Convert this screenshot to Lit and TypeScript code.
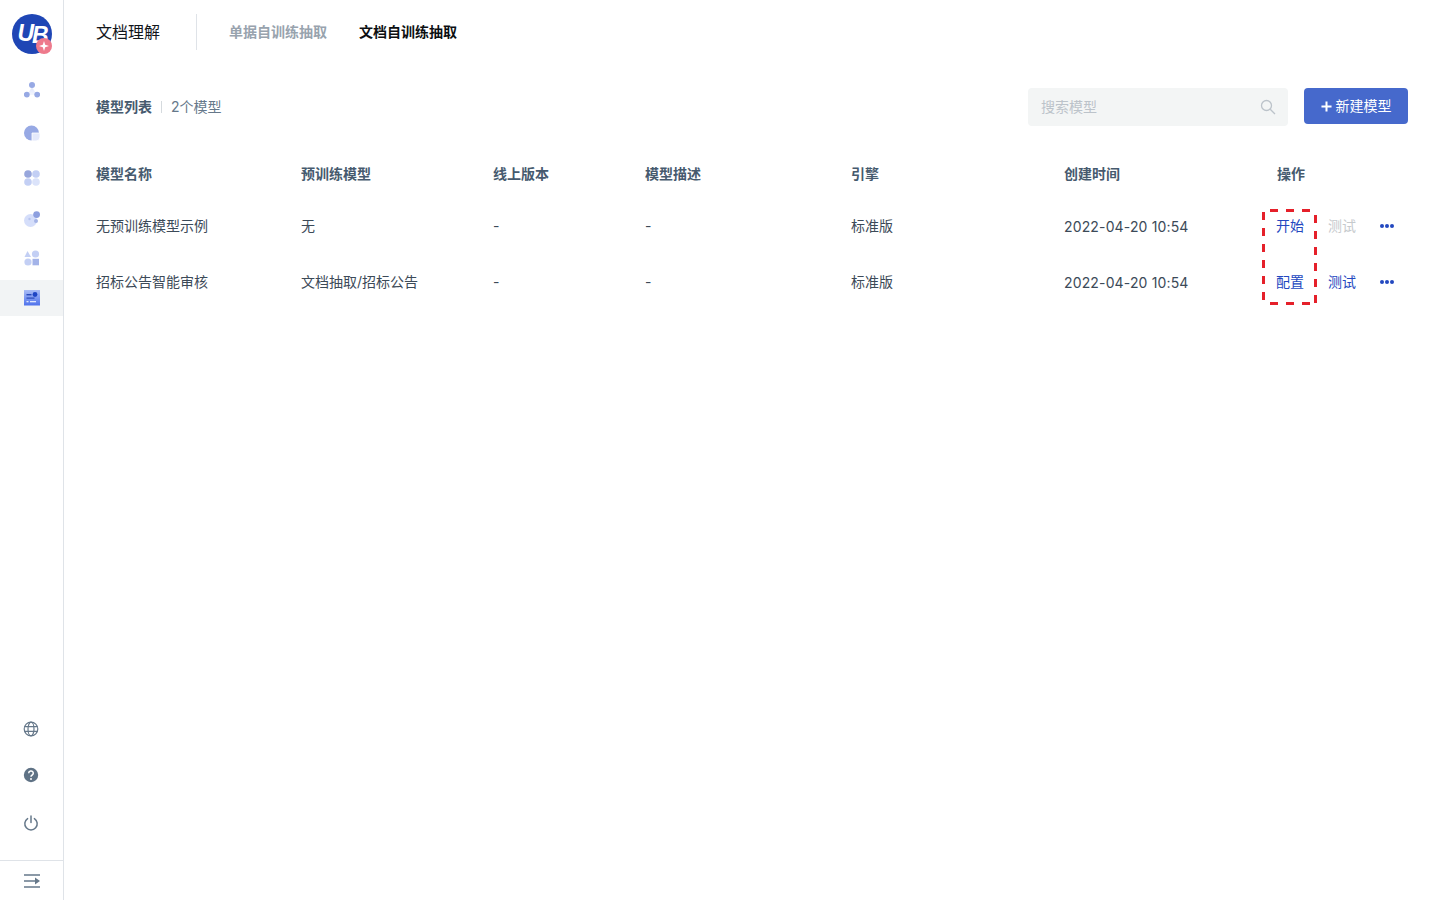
import { LitElement, html, css, svg } from 'lit';
import { customElement } from 'lit/decorators.js';

const rows = [
    { name: '无预训练模型示例', pre: '无', first: '开始', testOff: true },
    { name: '招标公告智能审核', pre: '文档抽取/招标公告', first: '配置', testOff: false },
];

const navIcons = [
    svg`<defs><linearGradient id="g1" x1="0" y1="0" x2="0" y2="1"><stop offset="0" stop-color="#dfe6fb"/><stop offset="1" stop-color="#f4f6fe"/></linearGradient></defs>
        <path d="M8 5 L13 13 H3 Z" fill="url(#g1)"/>
        <circle cx="8" cy="3" r="3" fill="#97a9e4"/><circle cx="2.8" cy="12.6" r="2.9" fill="#97a9e4"/><circle cx="13.2" cy="12.6" r="2.9" fill="#97a9e4"/>`,
    svg`<circle cx="7.5" cy="8" r="7.5" fill="#97a9e4"/><path d="M8 8 H16 V12 A4 4 0 0 1 12 16 H8 Z" fill="#e4e9fb" stroke="#fff" stroke-width=".8"/>`,
    svg`<circle cx="4" cy="4" r="3.8" fill="#97a6dc"/><circle cx="12" cy="4" r="3.8" fill="#c3cff4"/><circle cx="4" cy="12" r="3.8" fill="#c3cff4"/><circle cx="12" cy="12" r="3.8" fill="#dbe3fa"/>`,
    svg`<circle cx="6.5" cy="9.5" r="6.5" fill="#d5defa"/><circle cx="12.6" cy="3.6" r="3.4" fill="#8d9fdf"/><circle cx="12" cy="10" r="2" fill="#a5b4e6"/><circle cx="5.5" cy="8" r="1.2" fill="#b8c5f0"/>`,
    svg`<path d="M3.5 1 L7 7 H0.5 Z" fill="#c3cff4"/><circle cx="11.5" cy="4" r="3.6" fill="#c3cff4"/><circle cx="4" cy="12" r="3.6" fill="#c3cff4"/><rect x="8.5" y="8.8" width="6.5" height="6.5" fill="#a3b3e8"/>`,
];

const icon = (content: unknown) => html`<svg width="16" height="16" viewBox="0 0 16 16">${content}</svg>`;

@customElement('app-root')
export class AppRoot extends LitElement {
    static styles = css`
        :host {
            display: flex;
            position: relative;
            width: 1440px;
            height: 900px;
            overflow: hidden;
            background: #fff;
            font-family: Inter, "Noto Sans CJK SC", sans-serif;
            font-size: 14px;
            color: #3c4a58;
        }
        .side {
            width: 64px;
            box-sizing: border-box;
            border-right: 1px solid #dfe3e8;
            display: flex;
            flex-direction: column;
            flex: none;
        }
        .logo {
            position: relative;
            width: 40px;
            height: 40px;
            margin: 14px 0 0 12px;
            border-radius: 50%;
            background: #1f46b5;
            color: #fff;
            font: italic 700 23px/38px "Liberation Sans", sans-serif;
            text-align: center;
            letter-spacing: -2px;
        }
        .logo b {
            display: inline-block;
            transform: translateY(2px);
        }
        .spark {
            position: absolute;
            right: 0;
            bottom: 0;
            width: 16px;
            height: 16px;
            border-radius: 50%;
            background: #ee7a8c;
            display: flex;
            align-items: center;
            justify-content: center;
        }
        .nav {
            display: flex;
            flex-direction: column;
            margin-top: 15px;
        }
        .nav-item {
            height: 42px;
            display: flex;
            align-items: center;
            justify-content: center;
        }
        .nav-item:nth-child(2) {
            height: 44px;
        }
        .nav-item:nth-child(3) {
            height: 45px;
        }
        .nav-item:nth-child(4) {
            height: 37px;
        }
        .nav-item.active {
            height: 36px;
            margin-top: 1px;
            background: #f2f4f5;
        }
        .tools {
            margin-top: auto;
            display: flex;
            flex-direction: column;
            align-items: center;
            gap: 30px;
            padding: 0 1px 29px 0;
        }
        .tools svg:last-child {
            margin-top: 2px;
        }
        .collapse {
            height: 39px;
            border-top: 1px solid #dfe3e8;
            display: flex;
            align-items: center;
            justify-content: center;
        }
        .main {
            flex: 1;
            min-width: 0;
            padding: 0 32px;
        }
        .top {
            height: 64px;
            display: flex;
            align-items: center;
        }
        .title {
            font-size: 16px;
            color: #12161b;
            padding-right: 36px;
            margin-right: 32px;
            height: 36px;
            line-height: 36px;
            border-right: 1px solid #dfe3e8;
        }
        .tab {
            font-weight: 600;
            color: #98a3ae;
            margin-right: 32px;
            padding-bottom: 2px;
        }
        .tab.on {
            color: #0c0f12;
        }
        .bar {
            display: flex;
            align-items: center;
            height: 62px;
            margin-top: 12px;
        }
        .bar b {
            font-weight: 600;
            color: #465a6e;
            padding-bottom: 2px;
        }
        .sep {
            width: 1px;
            height: 12px;
            background: #d5dade;
            margin: 0 9px;
        }
        .count {
            color: #66788a;
            padding-bottom: 2px;
        }
        .search {
            margin-left: auto;
            width: 260px;
            height: 38px;
            box-sizing: border-box;
            padding: 0 12px 0 13px;
            border-radius: 4px;
            background: #f3f5f5;
            color: #bcc3ca;
            display: flex;
            align-items: center;
            justify-content: space-between;
        }
        .search span {
            padding-bottom: 2px;
        }
        .add {
            margin-left: 16px;
            width: 104px;
            height: 36px;
            margin-top: -2px;
            border-radius: 4px;
            background: #4669cc;
            color: #fff;
            display: flex;
            align-items: center;
            justify-content: center;
            gap: 4px;
        }
        .add span {
            padding-bottom: 3px;
        }
        .row {
            display: grid;
            grid-template-columns: 205px 192px 152px 206px 213px 213px 1fr;
            align-items: center;
            height: 56px;
        }
        .head {
            height: 48px;
            margin-top: 11px;
            font-weight: 600;
            color: #465a6e;
        }
        .date {
            letter-spacing: 0.15px;
            padding-top: 2px;
        }
        .ops {
            display: flex;
            align-items: center;
            gap: 24px;
            margin-left: -1px;
            color: #2348c0;
        }
        .off {
            color: #c6cacd;
        }
        .dots {
            display: flex;
            gap: 1px;
            margin-top: 1px;
        }
        .dots i {
            width: 4px;
            height: 4px;
            border-radius: 50%;
            background: #2348c0;
        }
        .mark {
            position: absolute;
            left: 1262px;
            top: 209px;
            width: 55px;
            height: 96px;
            pointer-events: none;
        }
    `;

    render() {
        return html`
            <aside class="side">
                <div class="logo">U<b>B</b>
                    <span class="spark"><svg width="10" height="10" viewBox="0 0 10 10"><path d="M5 0 L6.2 3.8 L10 5 L6.2 6.2 L5 10 L3.8 6.2 L0 5 L3.8 3.8 Z" fill="#fff"/></svg></span>
                </div>
                <nav class="nav">
                    ${navIcons.map(i => html`<div class="nav-item">${icon(i)}</div>`)}
                    <div class="nav-item active">
                        <svg width="16" height="16" viewBox="0 0 16 16">
                            <defs><linearGradient id="g2" x1="0" y1="0" x2="0" y2="1"><stop offset="0" stop-color="#a9bcf5"/><stop offset="1" stop-color="#4f72ec"/></linearGradient></defs>
                            <rect width="16" height="15.5" fill="url(#g2)"/>
                            <rect x="2.5" y="4" width="5" height="1.4" fill="#2b4bb8"/><circle cx="11" cy="4.5" r="2.4" fill="#1f46c4"/>
                            <rect x="2.5" y="7.5" width="8" height="1.2" fill="#2b4bb8"/><rect x="2.5" y="11" width="2" height="1.3" fill="#dfe6fd"/><rect x="6" y="11" width="6" height="1.3" fill="#dfe6fd"/>
                        </svg>
                    </div>
                </nav>
                <div class="tools">
                    <svg width="16" height="16" viewBox="0 0 16 16" fill="none" stroke="#66788a" stroke-width="1.2">
                        <circle cx="8" cy="8" r="6.8"/><ellipse cx="8" cy="8" rx="3" ry="6.8"/><path d="M1.6 5.6 H14.4 M1.6 10.4 H14.4"/>
                    </svg>
                    <svg width="16" height="16" viewBox="0 0 16 16">
                        <circle cx="8" cy="8" r="7.2" fill="#5f7285"/>
                        <path d="M5.7 6.2 A2.3 2.2 0 1 1 9.2 8 C8.3 8.5 8 9 8 9.8" fill="none" stroke="#fff" stroke-width="1.5"/>
                        <circle cx="8" cy="11.9" r="1" fill="#fff"/>
                    </svg>
                    <svg width="16" height="16" viewBox="0 0 16 16" fill="none" stroke="#66788a" stroke-width="1.5" stroke-linecap="round">
                        <path d="M4.6 3.6 A6.2 6.2 0 1 0 11.4 3.6"/><path d="M8 1 V7.6"/>
                    </svg>
                </div>
                <div class="collapse">
                    <svg width="16" height="14" viewBox="0 0 16 14" fill="none" stroke="#66788a" stroke-width="1.6">
                        <path d="M0 1 H16 M0 7 H12 M0 13 H16"/><path d="M11 3.4 L16 7 L11 10.6 Z" fill="#66788a" stroke="none"/>
                    </svg>
                </div>
            </aside>
            <main class="main">
                <header class="top">
                    <div class="title">文档理解</div>
                    <div class="tab">单据自训练抽取</div>
                    <div class="tab on">文档自训练抽取</div>
                </header>
                <div class="bar">
                    <b>模型列表</b><span class="sep"></span><span class="count">2个模型</span>
                    <div class="search">
                        <span>搜索模型</span>
                        <svg width="16" height="16" viewBox="0 0 16 16" fill="none" stroke="#bcc3ca" stroke-width="1.3">
                            <circle cx="6.5" cy="6.5" r="5"/><path d="M10.2 10.2 L15 15"/>
                        </svg>
                    </div>
                    <div class="add">
                        <svg width="11" height="11" viewBox="0 0 12 12" stroke="#fff" stroke-width="2.2"><path d="M6 .5 V11.5 M.5 6 H11.5"/></svg>
                        <span>新建模型</span>
                    </div>
                </div>
                <div class="row head">
                    <div>模型名称</div><div>预训练模型</div><div>线上版本</div><div>模型描述</div><div>引擎</div><div>创建时间</div><div>操作</div>
                </div>
                ${rows.map(r => html`
                    <div class="row">
                        <div>${r.name}</div>
                        <div>${r.pre}</div>
                        <div>-</div>
                        <div>-</div>
                        <div>标准版</div>
                        <div class="date">2022-04-20 10:54</div>
                        <div class="ops">
                            <span>${r.first}</span>
                            <span class=${r.testOff ? 'off' : ''}>测试</span>
                            <span class="dots"><i></i><i></i><i></i></span>
                        </div>
                    </div>
                `)}
            </main>
            <svg class="mark" viewBox="0 0 55 96" fill="none" stroke="#e5202a" stroke-width="3" stroke-dasharray="8 8">
                <path d="M8 1.5 H48"/>
                <path d="M8 94.5 H48"/>
                <path d="M1.5 3 V91"/>
                <path d="M53.5 6 V94"/>
            </svg>
        `;
    }
}
